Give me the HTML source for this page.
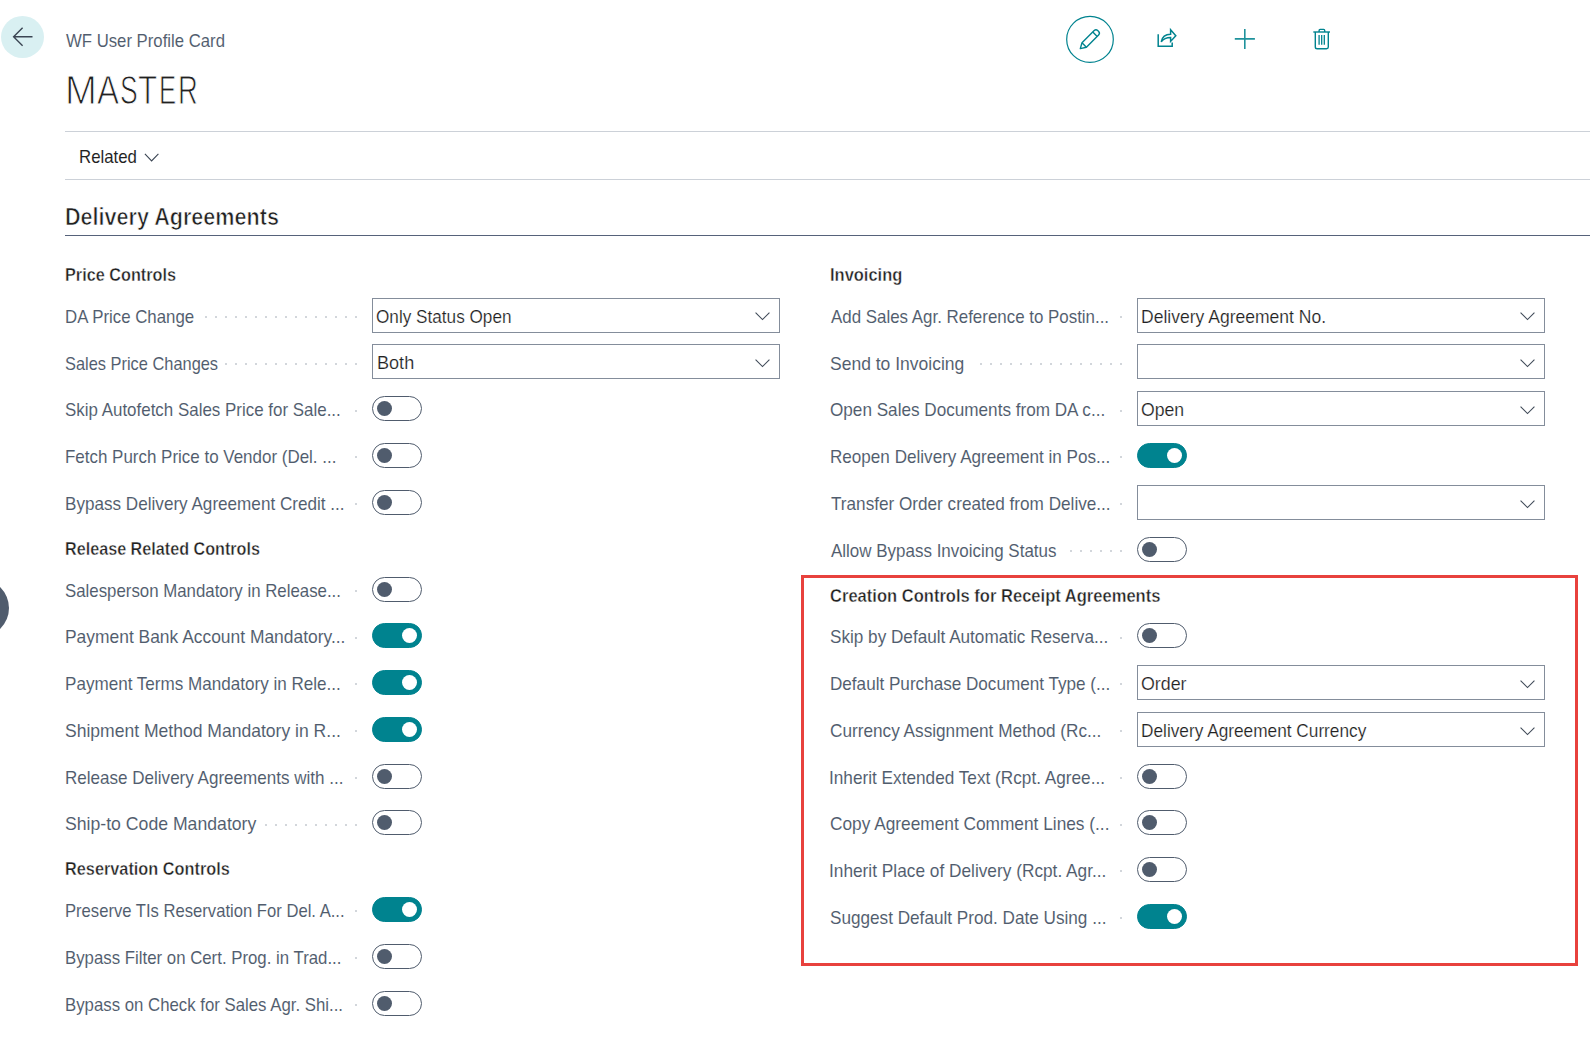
<!DOCTYPE html>
<html lang="en"><head><meta charset="utf-8"><title>WF User Profile Card - MASTER</title>
<style>
*{box-sizing:border-box;margin:0;padding:0}
html,body{width:1590px;height:1037px;overflow:hidden;background:#fff}
body{position:relative;font-family:"Liberation Sans", sans-serif;-webkit-font-smoothing:antialiased}
.t{position:absolute;white-space:nowrap;line-height:1;transform-origin:0 0;display:block}
.title{-webkit-text-stroke:1.05px #fff}
.lbl,.cap,.act{-webkit-text-stroke:0.06px #fff}
.val{-webkit-text-stroke:0.2px #fff}
.h2{-webkit-text-stroke:0.4px #fff}
.h1{-webkit-text-stroke:0.7px #fff}
.tg{position:absolute;width:50px;height:25px;border:1px solid #505c6d;border-radius:13px;background:#fff}
.tg i{position:absolute;left:4px;top:4px;width:15px;height:15px;border-radius:50%;background:#505c6d}
.tg.on{background:#00838f;border-color:#00838f}
.tg.on i{left:29px;background:#fff}
.sel{position:absolute;width:408px;height:35px;border:1px solid #848d9b;background:#fff}
.chv{position:absolute;right:9px;top:14px;width:15px;height:8.5px;overflow:visible}
.chv path{fill:none;stroke:#414b59;stroke-width:1.2}
.dot{position:absolute;width:2px;height:2px;border-radius:50%;background:#c3c8cf}
.hl{position:absolute;left:65px;right:0;height:1px;background:#ccd1d8}
.redbox{position:absolute;left:801px;top:575px;width:777px;height:391px;border:3px solid #e8413d}
.back{position:absolute;left:1px;top:16px;width:43px;height:42px;border-radius:50%;background:#d9f0f2}
.sidec{position:absolute;left:-49.3px;top:578.6px;width:58.4px;height:58.4px;border-radius:50%;background:#505c6d}
svg.ic{position:absolute;overflow:visible}
</style></head>
<body>

<div class="back"></div>
<svg class="ic" style="left:12px;top:26px" width="22" height="22" viewBox="0 0 22 22"><path d="M20.5 10.8 H1.6 M10.6 1.8 L1.6 10.8 L10.6 19.8" fill="none" stroke="#3b4553" stroke-width="1.4"/></svg>
<div class="sidec"></div>
<div class="hl" style="top:131px"></div>
<div class="hl" style="top:179px"></div>
<div class="hl" style="top:235px;background:#56627a"></div>
<svg class="ic" style="left:144px;top:153px" width="16" height="9" viewBox="0 0 16 9"><path d="M0.9 0.9 L7.6 7.9 L14.4 0.9" fill="none" stroke="#3b4553" stroke-width="1.1"/></svg>
<!-- action icons -->
<svg class="ic" style="left:1065px;top:15px" width="50" height="50" viewBox="0 0 50 50">
 <ellipse cx="25" cy="24.4" rx="23.3" ry="23" fill="none" stroke="#00838f" stroke-width="1.2"/>
 <g fill="none" stroke="#00838f" stroke-width="1.4" stroke-linejoin="round">
  <path d="M15.3 33.6 L17 27.8 L29.2 15.6 a2.5 2.5 0 0 1 3.5 0 l0.9 0.9 a2.5 2.5 0 0 1 0 3.5 L21.4 32.2 Z"/>
  <path d="M17 27.8 L21.4 32.2 M27.8 17 L32.2 21.4"/>
 </g>
</svg>
<svg class="ic" style="left:1155px;top:27px" width="24" height="22" viewBox="0 0 24 22">
 <g fill="none" stroke="#00838f" stroke-width="1.5">
  <path d="M3.2 7.2 V19.2 H17.2 V15.6"/>
  <path d="M6.2 14.8 C7.2 9.6 10.8 7.2 15.6 7.2 V2.8 L20.8 8.7 L15.6 14.4 V10.4 C11.6 10.4 8.6 11.4 6.2 14.8 Z" stroke-linejoin="miter"/>
 </g>
</svg>
<svg class="ic" style="left:1234px;top:28px" width="22" height="22" viewBox="0 0 22 22"><path d="M0.8 10.9 H20.9 M10.8 0.9 V21" fill="none" stroke="#1f929c" stroke-width="1.6"/></svg>
<svg class="ic" style="left:1312px;top:28px" width="20" height="22" viewBox="0 0 20 22">
 <g fill="none" stroke="#00838f" stroke-width="1.4">
  <path d="M1.3 4 H18"/>
  <path d="M7.1 4 V2.4 a1 1 0 0 1 1 -1 H11.7 a1 1 0 0 1 1 1 V4"/>
  <path d="M3.3 4 V19 a1.8 1.8 0 0 0 1.8 1.8 H14.5 a1.8 1.8 0 0 0 1.8 -1.8 V4"/>
  <path d="M7.1 6.9 V16.7 M9.7 6.9 V16.7 M12.3 6.9 V16.7" stroke-width="1.3"/>
 </g>
</svg>
<div class="redbox"></div>

<b class="dot" style="left:355.2px;top:316px"></b>
<b class="dot" style="left:345.2px;top:316px"></b>
<b class="dot" style="left:335.2px;top:316px"></b>
<b class="dot" style="left:325.2px;top:316px"></b>
<b class="dot" style="left:315.2px;top:316px"></b>
<b class="dot" style="left:305.2px;top:316px"></b>
<b class="dot" style="left:295.2px;top:316px"></b>
<b class="dot" style="left:285.2px;top:316px"></b>
<b class="dot" style="left:275.2px;top:316px"></b>
<b class="dot" style="left:265.2px;top:316px"></b>
<b class="dot" style="left:255.2px;top:316px"></b>
<b class="dot" style="left:245.2px;top:316px"></b>
<b class="dot" style="left:235.2px;top:316px"></b>
<b class="dot" style="left:225.2px;top:316px"></b>
<b class="dot" style="left:215.2px;top:316px"></b>
<b class="dot" style="left:205.2px;top:316px"></b>
<div class="sel" style="left:372px;top:298px"><svg class="chv" style="top:13.3px" viewBox="0 0 16 9"><path d="M0.6 0.6 L8 8 L15.4 0.6"/></svg></div>
<b class="dot" style="left:355.2px;top:363px"></b>
<b class="dot" style="left:345.2px;top:363px"></b>
<b class="dot" style="left:335.2px;top:363px"></b>
<b class="dot" style="left:325.2px;top:363px"></b>
<b class="dot" style="left:315.2px;top:363px"></b>
<b class="dot" style="left:305.2px;top:363px"></b>
<b class="dot" style="left:295.2px;top:363px"></b>
<b class="dot" style="left:285.2px;top:363px"></b>
<b class="dot" style="left:275.2px;top:363px"></b>
<b class="dot" style="left:265.2px;top:363px"></b>
<b class="dot" style="left:255.2px;top:363px"></b>
<b class="dot" style="left:245.2px;top:363px"></b>
<b class="dot" style="left:235.2px;top:363px"></b>
<b class="dot" style="left:225.2px;top:363px"></b>
<div class="sel" style="left:372px;top:344px"><svg class="chv" style="top:14.0px" viewBox="0 0 16 9"><path d="M0.6 0.6 L8 8 L15.4 0.6"/></svg></div>
<b class="dot" style="left:355.2px;top:410px"></b>
<div class="tg" style="left:372px;top:396px"><i></i></div>
<b class="dot" style="left:355.2px;top:456px"></b>
<div class="tg" style="left:372px;top:443px"><i></i></div>
<b class="dot" style="left:355.2px;top:503px"></b>
<div class="tg" style="left:372px;top:490px"><i></i></div>
<b class="dot" style="left:355.2px;top:590px"></b>
<div class="tg" style="left:372px;top:577px"><i></i></div>
<b class="dot" style="left:355.2px;top:637px"></b>
<div class="tg on" style="left:372px;top:623px"><i></i></div>
<b class="dot" style="left:355.2px;top:683px"></b>
<div class="tg on" style="left:372px;top:670px"><i></i></div>
<b class="dot" style="left:355.2px;top:730px"></b>
<div class="tg on" style="left:372px;top:717px"><i></i></div>
<b class="dot" style="left:355.2px;top:777px"></b>
<div class="tg" style="left:372px;top:764px"><i></i></div>
<b class="dot" style="left:355.2px;top:824px"></b>
<b class="dot" style="left:345.2px;top:824px"></b>
<b class="dot" style="left:335.2px;top:824px"></b>
<b class="dot" style="left:325.2px;top:824px"></b>
<b class="dot" style="left:315.2px;top:824px"></b>
<b class="dot" style="left:305.2px;top:824px"></b>
<b class="dot" style="left:295.2px;top:824px"></b>
<b class="dot" style="left:285.2px;top:824px"></b>
<b class="dot" style="left:275.2px;top:824px"></b>
<b class="dot" style="left:265.2px;top:824px"></b>
<div class="tg" style="left:372px;top:810px"><i></i></div>
<b class="dot" style="left:355.2px;top:910px"></b>
<div class="tg on" style="left:372px;top:897px"><i></i></div>
<b class="dot" style="left:355.2px;top:957px"></b>
<div class="tg" style="left:372px;top:944px"><i></i></div>
<b class="dot" style="left:355.2px;top:1004px"></b>
<div class="tg" style="left:372px;top:991px"><i></i></div>
<b class="dot" style="left:1120.4px;top:316px"></b>
<div class="sel" style="left:1137px;top:298px"><svg class="chv" style="top:13.3px" viewBox="0 0 16 9"><path d="M0.6 0.6 L8 8 L15.4 0.6"/></svg></div>
<b class="dot" style="left:1120.4px;top:363px"></b>
<b class="dot" style="left:1110.4px;top:363px"></b>
<b class="dot" style="left:1100.4px;top:363px"></b>
<b class="dot" style="left:1090.4px;top:363px"></b>
<b class="dot" style="left:1080.4px;top:363px"></b>
<b class="dot" style="left:1070.4px;top:363px"></b>
<b class="dot" style="left:1060.4px;top:363px"></b>
<b class="dot" style="left:1050.4px;top:363px"></b>
<b class="dot" style="left:1040.4px;top:363px"></b>
<b class="dot" style="left:1030.4px;top:363px"></b>
<b class="dot" style="left:1020.4px;top:363px"></b>
<b class="dot" style="left:1010.4px;top:363px"></b>
<b class="dot" style="left:1000.4px;top:363px"></b>
<b class="dot" style="left:990.4px;top:363px"></b>
<b class="dot" style="left:980.4px;top:363px"></b>
<div class="sel" style="left:1137px;top:344px"><svg class="chv" style="top:14.0px" viewBox="0 0 16 9"><path d="M0.6 0.6 L8 8 L15.4 0.6"/></svg></div>
<b class="dot" style="left:1120.4px;top:410px"></b>
<div class="sel" style="left:1137px;top:391px"><svg class="chv" style="top:13.6px" viewBox="0 0 16 9"><path d="M0.6 0.6 L8 8 L15.4 0.6"/></svg></div>
<b class="dot" style="left:1120.4px;top:456px"></b>
<div class="tg on" style="left:1137px;top:443px"><i></i></div>
<b class="dot" style="left:1120.4px;top:503px"></b>
<div class="sel" style="left:1137px;top:485px"><svg class="chv" style="top:13.6px" viewBox="0 0 16 9"><path d="M0.6 0.6 L8 8 L15.4 0.6"/></svg></div>
<b class="dot" style="left:1120.4px;top:550px"></b>
<b class="dot" style="left:1110.4px;top:550px"></b>
<b class="dot" style="left:1100.4px;top:550px"></b>
<b class="dot" style="left:1090.4px;top:550px"></b>
<b class="dot" style="left:1080.4px;top:550px"></b>
<b class="dot" style="left:1070.4px;top:550px"></b>
<div class="tg" style="left:1137px;top:537px"><i></i></div>
<b class="dot" style="left:1120.4px;top:637px"></b>
<div class="tg" style="left:1137px;top:623px"><i></i></div>
<b class="dot" style="left:1120.4px;top:683px"></b>
<div class="sel" style="left:1137px;top:665px"><svg class="chv" style="top:13.6px" viewBox="0 0 16 9"><path d="M0.6 0.6 L8 8 L15.4 0.6"/></svg></div>
<b class="dot" style="left:1120.4px;top:730px"></b>
<div class="sel" style="left:1137px;top:712px"><svg class="chv" style="top:13.6px" viewBox="0 0 16 9"><path d="M0.6 0.6 L8 8 L15.4 0.6"/></svg></div>
<b class="dot" style="left:1120.4px;top:777px"></b>
<div class="tg" style="left:1137px;top:764px"><i></i></div>
<b class="dot" style="left:1120.4px;top:824px"></b>
<div class="tg" style="left:1137px;top:810px"><i></i></div>
<b class="dot" style="left:1120.4px;top:870px"></b>
<div class="tg" style="left:1137px;top:857px"><i></i></div>
<b class="dot" style="left:1120.4px;top:917px"></b>
<div class="tg on" style="left:1137px;top:904px"><i></i></div>
<span class="t cap" id="t0" style="left:65.50px;top:32px;font-size:18.3px;color:#505c6d;transform:scaleX(0.9150);">WF User Profile Card</span>
<span class="t title" id="t1" style="left:64.56px;top:70px;font-size:40.4px;color:#212121;transform:scaleX(0.9464);">M</span><span class="t title" id="t2" style="left:97.30px;top:70px;font-size:40.4px;color:#212121;transform:scaleX(0.8185);">A</span><span class="t title" id="t3" style="left:120.39px;top:70px;font-size:40.4px;color:#212121;transform:scaleX(0.6565);">S</span><span class="t title" id="t4" style="left:138.42px;top:70px;font-size:40.4px;color:#212121;transform:scaleX(0.7783);">T</span><span class="t title" id="t5" style="left:158.79px;top:70px;font-size:40.4px;color:#212121;transform:scaleX(0.6364);">E</span><span class="t title" id="t6" style="left:177.56px;top:70px;font-size:40.4px;color:#212121;transform:scaleX(0.6792);">R</span>
<span class="t act" id="t7" style="left:78.60px;top:148px;font-size:18.6px;color:#212121;transform:scaleX(0.9032);">Related</span>
<span class="t h1" id="t8" style="left:64.89px;top:206px;font-size:23.6px;color:#212121;font-weight:700;transform:scaleX(0.9147);">Delivery Agreements</span>
<span class="t h2" id="t9" style="left:65.23px;top:266px;font-size:18.6px;color:#212121;font-weight:700;transform:scaleX(0.8736);">Price Controls</span>
<span class="t lbl" id="t10" style="left:65.17px;top:308px;font-size:18.2px;color:#505c6d;transform:scaleX(0.9261);">DA Price Change</span>
<span class="t val" id="t11" style="left:375.96px;top:308px;font-size:18.2px;color:#212121;transform:scaleX(0.9437);">Only Status Open</span>
<span class="t lbl" id="t12" style="left:65.20px;top:355px;font-size:18.2px;color:#505c6d;transform:scaleX(0.9012);">Sales Price Changes</span>
<span class="t val" id="t13" style="left:376.61px;top:354px;font-size:18.2px;color:#212121;transform:scaleX(0.9943);">Both</span>
<span class="t lbl" id="t14" style="left:65.17px;top:401px;font-size:18.2px;color:#505c6d;transform:scaleX(0.9310);">Skip Autofetch Sales Price for Sale...</span>
<span class="t lbl" id="t15" style="left:65.17px;top:448px;font-size:18.2px;color:#505c6d;transform:scaleX(0.9322);">Fetch Purch Price to Vendor (Del. ...</span>
<span class="t lbl" id="t16" style="left:65.16px;top:495px;font-size:18.2px;color:#505c6d;transform:scaleX(0.9407);">Bypass Delivery Agreement Credit ...</span>
<span class="t h2" id="t17" style="left:65.23px;top:540px;font-size:18.6px;color:#212121;font-weight:700;transform:scaleX(0.8695);">Release Related Controls</span>
<span class="t lbl" id="t18" style="left:65.17px;top:582px;font-size:18.2px;color:#505c6d;transform:scaleX(0.9253);">Salesperson Mandatory in Release...</span>
<span class="t lbl" id="t19" style="left:65.14px;top:628px;font-size:18.2px;color:#505c6d;transform:scaleX(0.9576);">Payment Bank Account Mandatory...</span>
<span class="t lbl" id="t20" style="left:65.16px;top:675px;font-size:18.2px;color:#505c6d;transform:scaleX(0.9388);">Payment Terms Mandatory in Rele...</span>
<span class="t lbl" id="t21" style="left:65.14px;top:722px;font-size:18.2px;color:#505c6d;transform:scaleX(0.9644);">Shipment Method Mandatory in R...</span>
<span class="t lbl" id="t22" style="left:65.16px;top:769px;font-size:18.2px;color:#505c6d;transform:scaleX(0.9369);">Release Delivery Agreements with ...</span>
<span class="t lbl" id="t23" style="left:65.13px;top:815px;font-size:18.2px;color:#505c6d;transform:scaleX(0.9704);">Ship-to Code Mandatory</span>
<span class="t h2" id="t24" style="left:65.22px;top:860px;font-size:18.6px;color:#212121;font-weight:700;transform:scaleX(0.8763);">Reservation Controls</span>
<span class="t lbl" id="t25" style="left:65.19px;top:902px;font-size:18.2px;color:#505c6d;transform:scaleX(0.9139);">Preserve TIs Reservation For Del. A...</span>
<span class="t lbl" id="t26" style="left:65.18px;top:949px;font-size:18.2px;color:#505c6d;transform:scaleX(0.9239);">Bypass Filter on Cert. Prog. in Trad...</span>
<span class="t lbl" id="t27" style="left:65.18px;top:996px;font-size:18.2px;color:#505c6d;transform:scaleX(0.9227);">Bypass on Check for Sales Agr. Shi...</span>
<span class="t h2" id="t28" style="left:830.21px;top:266px;font-size:18.6px;color:#212121;font-weight:700;transform:scaleX(0.8862);">Invoicing</span>
<span class="t lbl" id="t29" style="left:831.10px;top:308px;font-size:18.2px;color:#505c6d;transform:scaleX(0.9292);">Add Sales Agr. Reference to Postin...</span>
<span class="t val" id="t30" style="left:1141.34px;top:308px;font-size:18.2px;color:#212121;transform:scaleX(0.9637);">Delivery Agreement No.</span>
<span class="t lbl" id="t31" style="left:830.14px;top:355px;font-size:18.2px;color:#505c6d;transform:scaleX(0.9623);">Send to Invoicing</span>
<span class="t lbl" id="t32" style="left:830.16px;top:401px;font-size:18.2px;color:#505c6d;transform:scaleX(0.9421);">Open Sales Documents from DA c...</span>
<span class="t val" id="t33" style="left:1140.83px;top:401px;font-size:18.2px;color:#212121;transform:scaleX(0.9698);">Open</span>
<span class="t lbl" id="t34" style="left:830.16px;top:448px;font-size:18.2px;color:#505c6d;transform:scaleX(0.9399);">Reopen Delivery Agreement in Pos...</span>
<span class="t lbl" id="t35" style="left:831.10px;top:495px;font-size:18.2px;color:#505c6d;transform:scaleX(0.9431);">Transfer Order created from Delive...</span>
<span class="t lbl" id="t36" style="left:831.10px;top:542px;font-size:18.2px;color:#505c6d;transform:scaleX(0.9332);">Allow Bypass Invoicing Status</span>
<span class="t h2" id="t37" style="left:830.21px;top:587px;font-size:18.6px;color:#212121;font-weight:700;transform:scaleX(0.8900);">Creation Controls for Receipt Agreements</span>
<span class="t lbl" id="t38" style="left:830.16px;top:628px;font-size:18.2px;color:#505c6d;transform:scaleX(0.9427);">Skip by Default Automatic Reserva...</span>
<span class="t lbl" id="t39" style="left:830.16px;top:675px;font-size:18.2px;color:#505c6d;transform:scaleX(0.9407);">Default Purchase Document Type (...</span>
<span class="t val" id="t40" style="left:1140.82px;top:675px;font-size:18.2px;color:#212121;transform:scaleX(0.9800);">Order</span>
<span class="t lbl" id="t41" style="left:830.15px;top:722px;font-size:18.2px;color:#505c6d;transform:scaleX(0.9453);">Currency Assignment Method (Rc...</span>
<span class="t val" id="t42" style="left:1141.35px;top:722px;font-size:18.2px;color:#212121;transform:scaleX(0.9485);">Delivery Agreement Currency</span>
<span class="t lbl" id="t43" style="left:829.21px;top:769px;font-size:18.2px;color:#505c6d;transform:scaleX(0.9458);">Inherit Extended Text (Rcpt. Agree...</span>
<span class="t lbl" id="t44" style="left:830.15px;top:815px;font-size:18.2px;color:#505c6d;transform:scaleX(0.9500);">Copy Agreement Comment Lines (...</span>
<span class="t lbl" id="t45" style="left:829.20px;top:862px;font-size:18.2px;color:#505c6d;transform:scaleX(0.9495);">Inherit Place of Delivery (Rcpt. Agr...</span>
<span class="t lbl" id="t46" style="left:830.16px;top:909px;font-size:18.2px;color:#505c6d;transform:scaleX(0.9430);">Suggest Default Prod. Date Using ...</span>

</body></html>
